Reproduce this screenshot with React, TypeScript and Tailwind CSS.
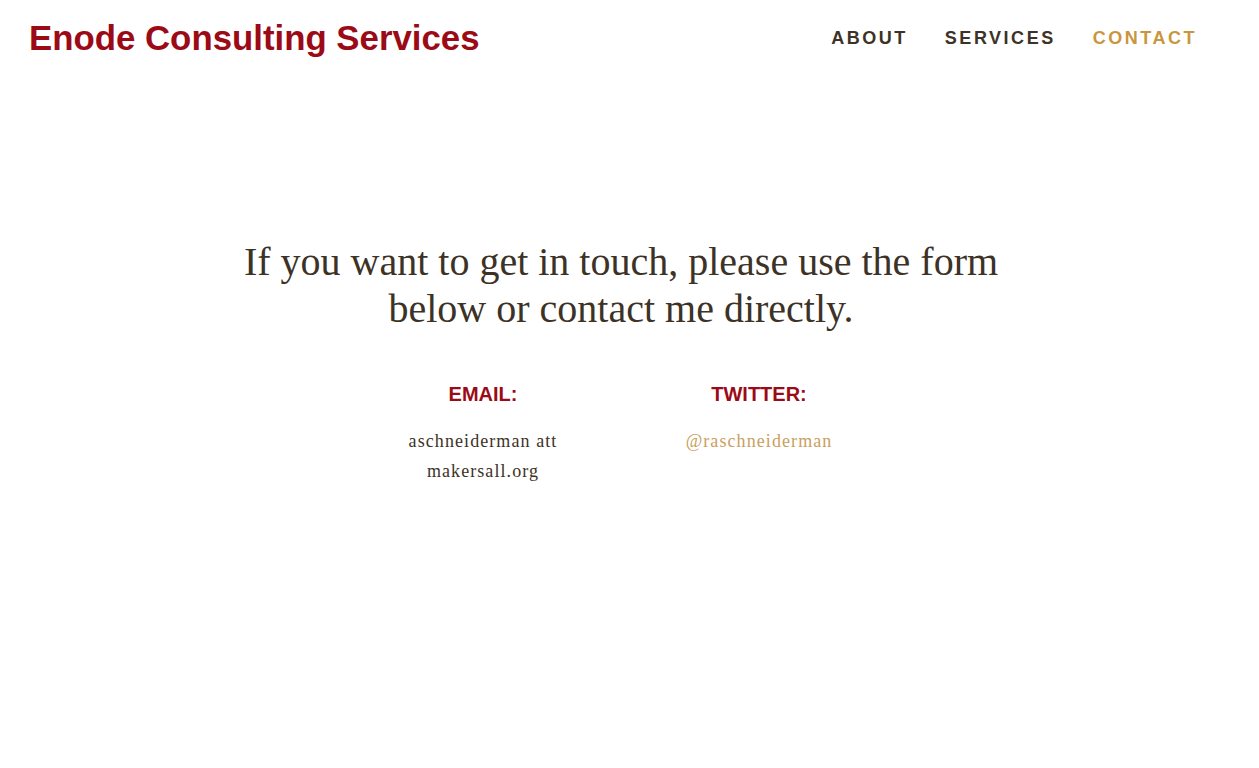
export default function App() {
  return (
    <div className="min-h-screen bg-white">
      <header className="flex items-center justify-between pl-[29px] pr-[62px] pt-[16px]">
        <h1 className="font-['Liberation_Sans',Arial,sans-serif] text-[34.8px] font-bold leading-[44px] text-[#9b0b17]">
          Enode Consulting Services
        </h1>
        <nav className="flex gap-[37px] font-['Liberation_Sans',Arial,sans-serif] text-[18px] font-bold tracking-[0.14em] leading-[44px]">
          <a className="text-[#3d3226]">ABOUT</a>
          <a className="text-[#3d3226]">SERVICES</a>
          <a className="text-[#c9963f]">CONTACT</a>
        </nav>
      </header>

      <main className="mr-[17px] flex flex-col items-center pt-[178px]">
        <p className="text-center font-['Liberation_Serif','Times_New_Roman',serif] text-[40px] leading-[47px] text-[#3d3226] max-w-[800px]">
          If you want to get in touch, please use the form below or contact me directly.
        </p>
        <div className="mt-[47px] flex gap-[76px]">
          <div className="w-[200px] text-center">
            <h3 className="font-['Liberation_Sans',Arial,sans-serif] text-[20px] font-bold leading-[30px] text-[#9b0b17]">
              EMAIL:
            </h3>
            <p className="mt-[17px] mx-auto w-[170px] font-['Liberation_Serif','Times_New_Roman',serif] text-[18px] tracking-[0.06em] leading-[30px] text-[#3d3226]">
              aschneiderman att makersall.org
            </p>
          </div>
          <div className="w-[200px] text-center">
            <h3 className="font-['Liberation_Sans',Arial,sans-serif] text-[20px] font-bold leading-[30px] text-[#9b0b17]">
              TWITTER:
            </h3>
            <p className="mt-[17px] font-['Liberation_Serif','Times_New_Roman',serif] text-[18px] tracking-[0.06em] leading-[30px] text-[#c9a060]">
              @raschneiderman
            </p>
          </div>
        </div>
      </main>
    </div>
  );
}
